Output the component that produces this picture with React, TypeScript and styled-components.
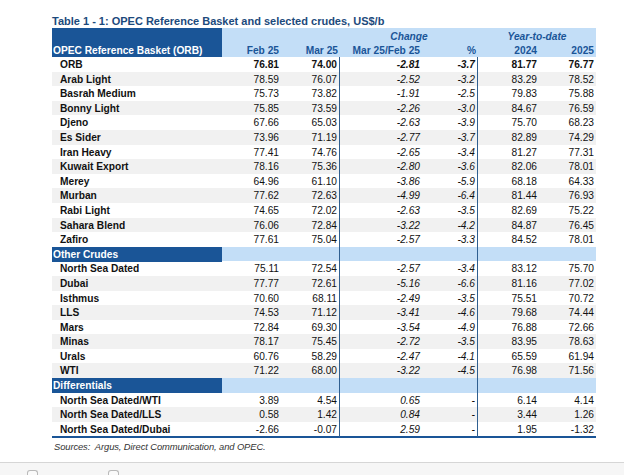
import React from "react";
import styled, { createGlobalStyle, css } from "styled-components";

const Global = createGlobalStyle`
  html, body { margin: 0; padding: 0; background: #ffffff; }
  body { font-family: "Liberation Sans", Arial, sans-serif; color: #000; }
`;

const DARK = "#1a5597";
const LIGHT = "#c3def7";
const NAVY = "#1c4a7c";
const GRID = "170px 59px 59px 82px 56px 61px 57px";

const Page = styled.div`
  width: 624px;
  height: 475px;
  display: flex;
  flex-direction: column;
  overflow: hidden;
`;

const Content = styled.div`
  flex: 1;
  padding: 14px 0 0 52px;
`;

const Title = styled.div`
  font-size: 11px;
  font-weight: bold;
  color: ${NAVY};
  line-height: 14px;
  height: 14px;
`;

const Table = styled.div`
  width: 544px;
  border-bottom: 2px solid ${DARK};
`;

const HeadRow = styled.div`
  display: grid;
  grid-template-columns: ${GRID};
  grid-template-rows: 16px 13px;
  background: ${LIGHT};
  font-size: 10.2px;
  font-weight: bold;
  color: ${DARK};
`;

const HeadName = styled.div`
  grid-row: 1 / span 2;
  grid-column: 1;
  background: ${DARK};
  color: #fff;
  display: flex;
  align-items: flex-end;
  padding: 0 0 0 1px;
  line-height: 13px;
`;

const HeadGroup = styled.div<{ $col: string }>`
  grid-row: 1;
  grid-column: ${(p) => p.$col};
  text-align: center;
  font-style: italic;
  line-height: 15px;
  padding-top: 1px;
`;

const HeadCell = styled.div<{ $col: number }>`
  grid-row: 2;
  grid-column: ${(p) => p.$col};
  text-align: right;
  padding-right: 2px;
  line-height: 13px;
`;

const Row = styled.div<{ $shade?: boolean; $bold?: boolean }>`
  display: grid;
  grid-template-columns: ${GRID};
  height: 14.6px;
  background: ${(p) => (p.$shade ? "#f1f1f1" : "#ffffff")};
  font-size: 10.2px;
  line-height: 15px;
  font-weight: ${(p) => (p.$bold ? "bold" : "normal")};
  color: #111;
`;

const SectionRow = styled.div`
  display: grid;
  grid-template-columns: ${GRID};
  height: 14.6px;
  background: ${LIGHT};
  font-size: 10.2px;
  line-height: 15px;
  font-weight: bold;
`;

const SectionName = styled.div`
  background: ${DARK};
  color: #fff;
  padding-left: 1px;
`;

const Name = styled.div`
  font-weight: bold;
  padding-left: 8px;
  white-space: nowrap;
`;

const Cell = styled.div<{ $italic?: boolean; $line?: boolean }>`
  text-align: right;
  padding-right: 2px;
  white-space: nowrap;
  ${(p) => p.$italic && css`font-style: italic;`}
  ${(p) =>
    p.$line &&
    css`
      border-right: 1px solid #2f5f90;
    `}
`;

const Blank = styled.div<{ $line?: boolean }>`
  ${(p) =>
    p.$line &&
    css`
      border-right: 1px solid #2f5f90;
    `}
`;

const Sources = styled.div`
  font-size: 9.4px;
  font-style: italic;
  color: #333;
  padding: 3px 0 0 2px;
  line-height: 12px;
  letter-spacing: -0.1px;
`;

const Footer = styled.div`
  height: 12px;
  border-top: 1px solid #d6d6d6;
  background: #f6f6f6;
  display: flex;
  align-items: flex-end;
  gap: 70px;
  padding-left: 27px;
`;

const Knob = styled.div`
  width: 9px;
  height: 4px;
  border: 1px solid #b9b9b9;
  border-bottom: none;
  border-radius: 3px 3px 0 0;
  background: #fafafa;
`;

type R = [string, string, string, string, string, string, string];

const orb: R[] = [
  ["ORB", "76.81", "74.00", "-2.81", "-3.7", "81.77", "76.77"],
  ["Arab Light", "78.59", "76.07", "-2.52", "-3.2", "83.29", "78.52"],
  ["Basrah Medium", "75.73", "73.82", "-1.91", "-2.5", "79.83", "75.88"],
  ["Bonny Light", "75.85", "73.59", "-2.26", "-3.0", "84.67", "76.59"],
  ["Djeno", "67.66", "65.03", "-2.63", "-3.9", "75.70", "68.23"],
  ["Es Sider", "73.96", "71.19", "-2.77", "-3.7", "82.89", "74.29"],
  ["Iran Heavy", "77.41", "74.76", "-2.65", "-3.4", "81.27", "77.31"],
  ["Kuwait Export", "78.16", "75.36", "-2.80", "-3.6", "82.06", "78.01"],
  ["Merey", "64.96", "61.10", "-3.86", "-5.9", "68.18", "64.33"],
  ["Murban", "77.62", "72.63", "-4.99", "-6.4", "81.44", "76.93"],
  ["Rabi Light", "74.65", "72.02", "-2.63", "-3.5", "82.69", "75.22"],
  ["Sahara Blend", "76.06", "72.84", "-3.22", "-4.2", "84.87", "76.45"],
  ["Zafiro", "77.61", "75.04", "-2.57", "-3.3", "84.52", "78.01"],
];

const other: R[] = [
  ["North Sea Dated", "75.11", "72.54", "-2.57", "-3.4", "83.12", "75.70"],
  ["Dubai", "77.77", "72.61", "-5.16", "-6.6", "81.16", "77.02"],
  ["Isthmus", "70.60", "68.11", "-2.49", "-3.5", "75.51", "70.72"],
  ["LLS", "74.53", "71.12", "-3.41", "-4.6", "79.68", "74.44"],
  ["Mars", "72.84", "69.30", "-3.54", "-4.9", "76.88", "72.66"],
  ["Minas", "78.17", "75.45", "-2.72", "-3.5", "83.95", "78.63"],
  ["Urals", "60.76", "58.29", "-2.47", "-4.1", "65.59", "61.94"],
  ["WTI", "71.22", "68.00", "-3.22", "-4.5", "76.98", "71.56"],
];

const diff: R[] = [
  ["North Sea Dated/WTI", "3.89", "4.54", "0.65", "-", "6.14", "4.14"],
  ["North Sea Dated/LLS", "0.58", "1.42", "0.84", "-", "3.44", "1.26"],
  ["North Sea Dated/Dubai", "-2.66", "-0.07", "2.59", "-", "1.95", "-1.32"],
];

const DataRow: React.FC<{ r: R; i: number; bold?: boolean }> = ({ r, i, bold }) => (
  <Row $shade={i % 2 === 1} $bold={bold}>
    <Name>{r[0]}</Name>
    <Cell>{r[1]}</Cell>
    <Cell $line>{r[2]}</Cell>
    <Cell $italic>{r[3]}</Cell>
    <Cell $italic $line>{r[4]}</Cell>
    <Cell>{r[5]}</Cell>
    <Cell>{r[6]}</Cell>
  </Row>
);

const Section: React.FC<{ label: string }> = ({ label }) => (
  <SectionRow>
    <SectionName>{label}</SectionName>
    <Blank />
    <Blank $line />
    <Blank />
    <Blank $line />
    <Blank />
    <Blank />
  </SectionRow>
);

export default function App() {
  return (
    <Page>
      <Global />
      <Content>
        <Title>Table 1 - 1: OPEC Reference Basket and selected crudes, US$/b</Title>
        <Table>
          <HeadRow>
            <HeadName>OPEC Reference Basket (ORB)</HeadName>
            <HeadGroup $col="4 / span 2">Change</HeadGroup>
            <HeadGroup $col="6 / span 2">Year-to-date</HeadGroup>
            <HeadCell $col={2}>Feb 25</HeadCell>
            <HeadCell $col={3}>Mar 25</HeadCell>
            <HeadCell $col={4}>Mar 25/Feb 25</HeadCell>
            <HeadCell $col={5}>%</HeadCell>
            <HeadCell $col={6}>2024</HeadCell>
            <HeadCell $col={7}>2025</HeadCell>
          </HeadRow>
          {orb.map((r, i) => (
            <DataRow key={r[0]} r={r} i={i} bold={i === 0} />
          ))}
          <Section label="Other Crudes" />
          {other.map((r, i) => (
            <DataRow key={r[0]} r={r} i={i} />
          ))}
          <Section label="Differentials" />
          {diff.map((r, i) => (
            <DataRow key={r[0]} r={r} i={i} />
          ))}
        </Table>
        <Sources>Sources:&nbsp; Argus, Direct Communication, and OPEC.</Sources>
      </Content>
      <Footer>
        <Knob />
        <Knob />
      </Footer>
    </Page>
  );
}
